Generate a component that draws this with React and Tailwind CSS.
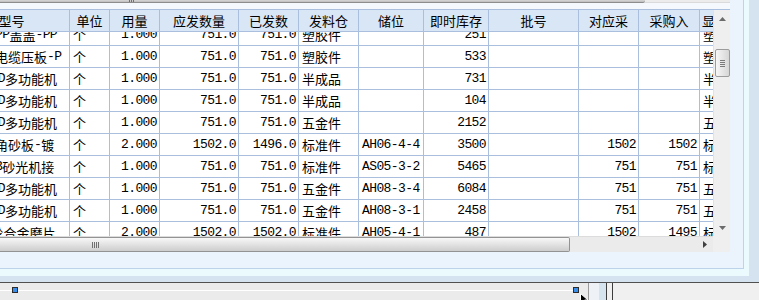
const LINE = 'border-[#a9bfdd]';
const COLS = 'grid grid-cols-[116px_40px_50px_79px_60px_60px_65px_65px_90px_60px_61px_60px]';

const headers = ['型号', '单位', '用量', '应发数量', '已发数', '发料仓', '储位', '即时库存', '批号', '对应采', '采购入', '显示'];
const rightCols = [2, 3, 4, 7, 9, 10];

const rows = [
  ['透明罩PP盖盖-PP', '个', '1.000', '751.0', '751.0', '塑胶件', '', '251', '', '', '', '塑'],
  ['接地线电缆压板-P', '个', '1.000', '751.0', '751.0', '塑胶件', '', '533', '', '', '', '塑'],
  ['12寸LED多功能机', '个', '1.000', '751.0', '751.0', '半成品', '', '731', '', '', '', '半'],
  ['12寸LED多功能机', '个', '1.000', '751.0', '751.0', '半成品', '', '104', '', '', '', '半'],
  ['12寸LED多功能机', '个', '1.000', '751.0', '751.0', '五金件', '', '2152', '', '', '', '五'],
  ['菱形三角砂板-镀', '个', '2.000', '1502.0', '1496.0', '标准件', 'AH06-4-4', '3500', '', '1502', '1502', '标'],
  ['打磨机B砂光机接', '个', '1.000', '751.0', '751.0', '标准件', 'AS05-3-2', '5465', '', '751', '751', '标'],
  ['12寸LED多功能机', '个', '1.000', '751.0', '751.0', '五金件', 'AH08-3-4', '6084', '', '751', '751', '五'],
  ['12寸LED多功能机', '个', '1.000', '751.0', '751.0', '五金件', 'AH08-3-1', '2458', '', '751', '751', '五'],
  ['80#砂轮合金磨片', '个', '2.000', '1502.0', '1502.0', '标准件', 'AH05-4-1', '487', '', '1502', '1495', '标'],
];

// ascii runs get the narrow mono face, the rest stays CJK
function Txt({ s }) {
  const parts = s.match(/[\x00-\x7f]+|[^\x00-\x7f]+/g) || [];
  return parts.map((p, i) =>
    /^[\x00-\x7f]/.test(p) ? (
      <span key={i} className="font-['Liberation_Mono',monospace] tracking-[-0.6px]">{p}</span>
    ) : (
      <span key={i}>{p}</span>
    )
  );
}

function HeaderRow() {
  return (
    <div className={`${COLS} h-[22px] bg-[#d9e6f5]`}>
      {headers.map((h, i) => (
        <div
          key={h}
          className={`flex items-center overflow-hidden whitespace-nowrap border-r border-b ${LINE} ${
            i === 11 ? 'justify-start pl-[2px]' : 'justify-center'
          }`}
        >
          {h}
        </div>
      ))}
    </div>
  );
}

function DataRow({ row }) {
  return (
    <div className={`${COLS} h-[22px] bg-white`}>
      {row.map((cell, i) => (
        <div
          key={i}
          className={`flex items-center overflow-hidden whitespace-nowrap border-r border-b ${LINE} ${
            rightCols.includes(i) ? 'justify-end pr-[2px]' : i === 0 ? 'pl-[2px]' : 'pl-[3px]'
          }`}
        >
          <Txt s={cell} />
        </div>
      ))}
    </div>
  );
}

function VScroll() {
  return (
    <div className="flex w-[17px] flex-col items-center bg-[#efefef] border-l border-[#e2e2e2]">
      <div className="flex h-[17px] items-center justify-center">
        <svg width="7" height="4" viewBox="0 0 7 4">
          <path d="M0 4 L3.5 0 L7 4 Z" fill="#6b6b6b" />
        </svg>
      </div>
      <div className="h-[22px]" />
      <div className="flex h-[28px] w-[15px] flex-col items-center justify-center gap-[1px] rounded-[2px] border border-[#9c9c9c] bg-linear-to-r from-[#f7f7f7] to-[#d6d6d6]">
        <div className="h-px w-[5px] bg-[#7a7a7a]" />
        <div className="h-px w-[5px] bg-[#7a7a7a]" />
        <div className="h-px w-[5px] bg-[#7a7a7a]" />
        <div className="h-px w-[5px] bg-[#7a7a7a]" />
      </div>
      <div className="flex-1" />
      <div className="flex h-[17px] items-center justify-center">
        <svg width="7" height="4" viewBox="0 0 7 4">
          <path d="M0 0 L7 0 L3.5 4 Z" fill="#6b6b6b" />
        </svg>
      </div>
    </div>
  );
}

function HScroll() {
  return (
    <div className="flex h-[16px]">
      <div className="flex w-[713px] bg-[#ebebeb] border-t border-[#dcdcdc]">
        <div className="flex w-[570px] items-center rounded-r-[2px] border border-l-0 border-[#939393] bg-linear-to-b from-[#f8f8f8] to-[#cdcdcd]">
          <div className="ml-[92px] flex gap-[1px]">
            <div className="h-[6px] w-px bg-[#6f6f6f]" />
            <div className="h-[6px] w-px bg-[#6f6f6f]" />
            <div className="h-[6px] w-px bg-[#6f6f6f]" />
            <div className="h-[6px] w-px bg-[#6f6f6f]" />
          </div>
        </div>
        <div className="flex-1" />
        <div className="flex w-[17px] items-center justify-center">
          <svg width="4" height="7" viewBox="0 0 4 7">
            <path d="M0 0 L4 3.5 L0 7 Z" fill="#3f3f3f" />
          </svg>
        </div>
      </div>
      <div className="w-[17px] bg-[#efefef]" />
    </div>
  );
}

function Grid() {
  return (
    <div className="flex h-[252px] w-[730px] flex-col">
      {/* bottom edge of the grid above */}
      <div className="flex h-[3px]">
        <div className="flex w-[645px] items-end rounded-br-[2px] border-b border-[#8d8d8d] bg-linear-to-b from-[#d8d8d8] to-[#bdbdbd]">
          <div className="ml-[129px] flex gap-[1px]">
            <div className="h-[2px] w-px bg-[#707070]" />
            <div className="h-[2px] w-px bg-[#707070]" />
            <div className="h-[2px] w-px bg-[#707070]" />
          </div>
        </div>
        <div className="flex-1 border-b border-[#dadada] bg-[#ececec]" />
      </div>
      <div className="h-[6px] bg-[#f5f9fe]" />
      <div className={`flex h-[227px] border-t ${LINE}`}>
        <div className="w-[713px] overflow-hidden bg-white">
          <div className="-ml-[46px]">
            <HeaderRow />
            <div className="h-[204px] overflow-hidden">
              <div className="-mt-[8px]">
                {rows.map((r, i) => (
                  <DataRow key={i} row={r} />
                ))}
              </div>
            </div>
          </div>
        </div>
        <VScroll />
      </div>
      <HScroll />
    </div>
  );
}

export default function App() {
  return (
    <div className="flex h-[300px] w-[759px] flex-col overflow-hidden bg-[#f0f0f0] font-['Noto_Sans_CJK_SC',sans-serif] text-[13px] leading-none text-black">
      <div className="flex h-[282px] bg-[#d5e3f1]">
        <div className="flex h-[276px] w-[749px] bg-[#ebfbfd]">
          <div className="h-[269px] w-[744px] border-r border-b border-[#bcd3ea] bg-[#ebf3fc]">
            <Grid />
          </div>
        </div>
      </div>
      <div className="h-px bg-[#505050]" />
      <div className="flex h-[17px]">
        <div className="relative w-[588px] bg-[#ebebeb]">
          <div className="mt-[7px] h-px w-[576px] bg-white" />
          <div className="absolute left-[12px] top-[4px] h-[6px] w-[6px] border border-[#2b2b2b] bg-[#3b8fea]" />
          <div className="absolute left-[573px] top-[4px] h-[6px] w-[6px] border border-[#2b2b2b] bg-[#3b8fea]" />
          <svg className="absolute left-[580px] top-[10px]" width="12" height="12" viewBox="0 0 12 12">
            <path d="M0.5 0.5 L0.5 10 L3 7.5 L5 11.5 L6.5 10.8 L4.6 7 L8 7 Z" fill="#000" stroke="#fff" strokeWidth="1" />
          </svg>
        </div>
        <div className="w-px bg-[#9a9a9a]" />
        <div className="w-[10px] bg-[#eef1f5]" />
        <div className="w-[7px] bg-[#d6e4f0]" />
        <div className="w-px bg-[#3c3c3c]" />
        <div className="w-[5px] bg-[#f0f0f0]" />
        <div className="w-px bg-[#3c3c3c]" />
        <div className="flex-1 bg-[#f0f0f0]" />
      </div>
    </div>
  );
}
